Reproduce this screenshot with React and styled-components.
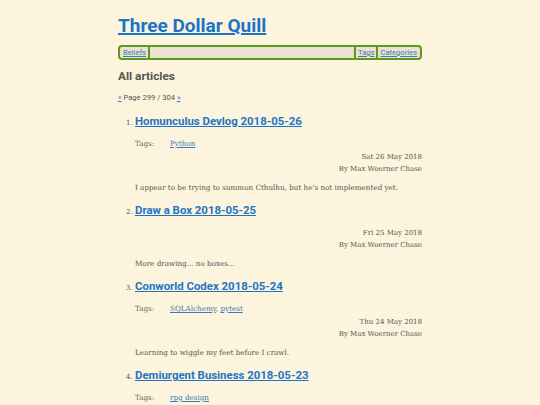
import React from "react";
import styled, { createGlobalStyle } from "styled-components";

const Global = createGlobalStyle`
  html, body { margin: 0; padding: 0; background: #fcf4dc; }
  body { font-family: "DejaVu Serif", "Liberation Serif", serif; color: #5a5a5a; }
  a { color: #2f76c0; }
`;

const Page = styled.div`
  width: 304px;
  margin: 0 auto;
  padding-top: 15px;
`;

const SiteTitle = styled.h1`
  margin: 0;
  font-family: Roboto, "Open Sans", sans-serif;
  font-size: 19px;
  line-height: 22px;
  font-weight: 700;
  a { color: #1d74c6; text-decoration-thickness: 2px; }
`;

const Nav = styled.nav`
  margin-top: 8px;
  display: flex;
  align-items: center;
  height: 11px;
  padding: 0 2px;
  border: 2px solid #5c9a1e;
  border-radius: 4px;
  background: #ebe3cf;
  font-family: Roboto, "Open Sans", sans-serif;
  font-size: 7.6px;
`;

const NavLink = styled.a`
  color: #3a7ab8;
  padding: 0 1px;
`;

const Sep = styled.span`
  width: 2px;
  height: 11px;
  background: #5c9a1e;
  margin: 0 1px;
`;

const Spacer = styled.div`
  flex: 1;
`;

const SectionTitle = styled.h2`
  margin: 8px 0 0;
  font-family: Roboto, "Open Sans", sans-serif;
  font-size: 11.8px;
  line-height: 16px;
  color: #555;
`;

const Pager = styled.div`
  margin-top: 9px;
  font-family: Roboto, "Open Sans", sans-serif;
  font-size: 7.6px;
  line-height: 10px;
  color: #555;
  a { color: #3a7ab8; }
`;

const List = styled.ol`
  margin: 10px 0 0;
  padding-left: 17px;
  font-size: 7px;
`;

const Item = styled.li`
  margin-bottom: 8px;
  &::marker { font-family: "DejaVu Serif", serif; color: #555; }
`;

const ItemTitle = styled.h3`
  margin: 0;
  font-family: Roboto, "Open Sans", sans-serif;
  font-size: 11.4px;
  line-height: 16px;
  font-weight: 700;
  a { color: #1d74c6; }
`;

const TagRow = styled.div`
  display: flex;
  margin-top: 9px;
  font-size: 7.2px;
  line-height: 12px;
`;

const TagLabel = styled.span`
  width: 35px;
  color: #666;
`;

const TagLinks = styled.span`
  a { color: #3a7ab8; }
`;

const Meta = styled.div`
  margin-top: ${(p) => (p.$noTags ? "9px" : "1px")};
  text-align: right;
  font-size: 7px;
  line-height: 12px;
  color: #555;
`;

const Summary = styled.p`
  margin: 7px 0 0;
  font-size: 7.2px;
  line-height: 12px;
  color: #555;
`;

const articles = [
  {
    title: "Homunculus Devlog 2018-05-26",
    tags: ["Python"],
    date: "Sat 26 May 2018",
    summary: "I appear to be trying to summon Cthulhu, but he's not implemented yet.",
  },
  {
    title: "Draw a Box 2018-05-25",
    tags: [],
    date: "Fri 25 May 2018",
    summary: "More drawing... no boxes...",
  },
  {
    title: "Conworld Codex 2018-05-24",
    tags: ["SQLAlchemy", "pytest"],
    date: "Thu 24 May 2018",
    summary: "Learning to wiggle my feet before I crawl.",
  },
  {
    title: "Demiurgent Business 2018-05-23",
    tags: ["rpg design"],
    date: "Wed 23 May 2018",
    summary: "Thinking about things.",
  },
];

export default function App() {
  return (
    <>
      <Global />
      <Page>
        <SiteTitle>
          <a href="#">Three Dollar Quill</a>
        </SiteTitle>
        <Nav>
          <NavLink href="#">Beliefs</NavLink>
          <Sep />
          <Spacer />
          <Sep />
          <NavLink href="#">Tags</NavLink>
          <Sep />
          <NavLink href="#">Categories</NavLink>
        </Nav>
        <SectionTitle>All articles</SectionTitle>
        <Pager>
          <a href="#">«</a> Page 299 / 304 <a href="#">»</a>
        </Pager>
        <List>
          {articles.map((a) => (
            <Item key={a.title}>
              <ItemTitle>
                <a href="#">{a.title}</a>
              </ItemTitle>
              {a.tags.length > 0 && (
                <TagRow>
                  <TagLabel>Tags:</TagLabel>
                  <TagLinks>
                    {a.tags.map((t, i) => (
                      <React.Fragment key={t}>
                        {i > 0 && ", "}
                        <a href="#">{t}</a>
                      </React.Fragment>
                    ))}
                  </TagLinks>
                </TagRow>
              )}
              <Meta $noTags={a.tags.length === 0}>
                {a.date}
                <br />
                By Max Woerner Chase
              </Meta>
              <Summary>{a.summary}</Summary>
            </Item>
          ))}
        </List>
      </Page>
    </>
  );
}
